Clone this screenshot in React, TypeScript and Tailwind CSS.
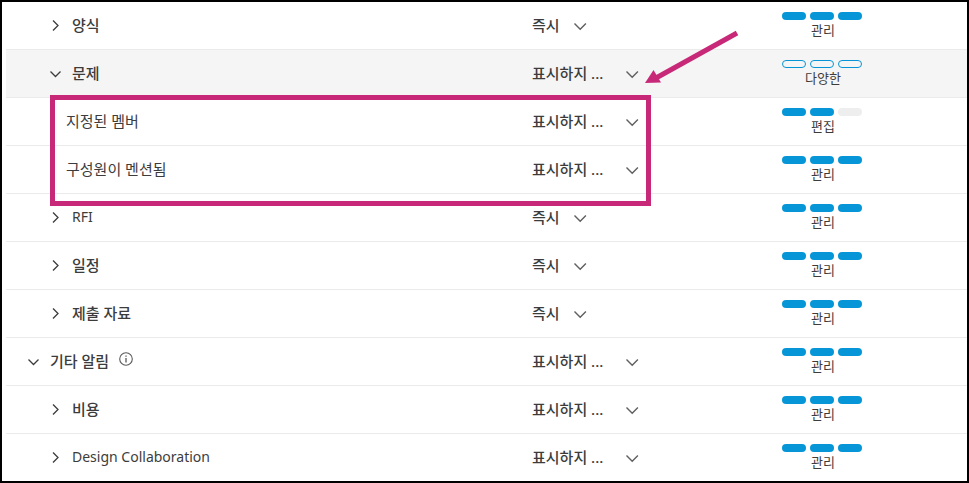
type Row = {
  label: string;
  level: "group" | "item" | "child";
  open?: boolean;
  info?: boolean;
  latin?: boolean;
  value: string;
  access: "관리" | "편집" | "다양한";
};

const HIDDEN = "표시하지 ...";
const INSTANT = "즉시";

const rows: Row[] = [
  { label: "양식", level: "item", value: INSTANT, access: "관리" },
  { label: "문제", level: "item", open: true, value: HIDDEN, access: "다양한" },
  { label: "지정된 멤버", level: "child", value: HIDDEN, access: "편집" },
  { label: "구성원이 멘션됨", level: "child", value: HIDDEN, access: "관리" },
  { label: "RFI", level: "item", latin: true, value: INSTANT, access: "관리" },
  { label: "일정", level: "item", value: INSTANT, access: "관리" },
  { label: "제출 자료", level: "item", value: INSTANT, access: "관리" },
  { label: "기타 알림", level: "group", open: true, info: true, value: HIDDEN, access: "관리" },
  { label: "비용", level: "item", value: HIDDEN, access: "관리" },
  { label: "Design Collaboration", level: "item", latin: true, value: HIDDEN, access: "관리" },
];

const indent = {
  group: "pl-5",
  item: "pl-[42px]",
  child: "pl-[60px]",
};

const pills = {
  관리: ["bg-[#0696d7]", "bg-[#0696d7]", "bg-[#0696d7]"],
  편집: ["bg-[#0696d7]", "bg-[#0696d7]", "bg-[#eeeeee]"],
  다양한: [
    "border border-[#0696d7]",
    "border border-[#0696d7]",
    "border border-[#0696d7]",
  ],
};

function Toggle({ label, open }: { label: string; open?: boolean }) {
  return (
    <button
      type="button"
      aria-label={label}
      aria-expanded={!!open}
      className="flex h-6 w-4 items-center justify-center"
    >
      <svg width="12" height="12" viewBox="0 0 12 12" fill="none" stroke="#3c3c3c" strokeWidth="1.3">
        {open ? <path d="M.5 4.500l5 5 5-5" /> : <path d="M3 1.500l5 5-5 5" />}
      </svg>
    </button>
  );
}

function InfoIcon() {
  return (
    <svg width="14" height="14" viewBox="0 0 14 14" fill="none" stroke="#5a5a5a" className="mb-1 ml-2.5">
      <circle cx="7" cy="7" r="6.3" strokeWidth="1.1" />
      <path d="M7 6v4.500M7 3.500v1.300" strokeWidth="1.3" />
    </svg>
  );
}

function Frequency({ label, value }: { label: string; value: string }) {
  return (
    <div className="relative inline-block align-middle">
      <select
        aria-label={label}
        defaultValue={value}
        className={
          value === INSTANT
            ? "block h-6 w-14 appearance-none bg-transparent font-medium"
            : "block h-6 w-27 appearance-none bg-transparent font-medium"
        }
      >
        <option>{INSTANT}</option>
        <option>{HIDDEN}</option>
      </select>
      <svg
        width="14"
        height="10"
        viewBox="0 0 14 10"
        fill="none"
        stroke="#5f5f5f"
        strokeWidth="1.4"
        className="pointer-events-none absolute right-0 top-2"
      >
        <path d="M.5 2.500l5.700 5.700 5.700-5.700" />
      </svg>
    </div>
  );
}

function Access({ access }: { access: Row["access"] }) {
  return (
    <div className="flex w-20 flex-col items-center">
      <div className="flex gap-1">
        {pills[access].map((style, i) => (
          <span key={i} className={`h-2 w-6 rounded-full ${style}`} />
        ))}
      </div>
      <span className="mt-0.5 pl-0.5 text-[13px] leading-4">{access}</span>
    </div>
  );
}

export default function App() {
  return (
    <main className="relative border-2 border-black bg-white pl-1 font-['Noto_Sans','Noto_Sans_CJK_KR',sans-serif] text-[15px] leading-5 text-[#3c3c3c]">
      <table className="w-full table-fixed border-separate border-spacing-0">
        <colgroup>
          <col />
          <col className="w-58" />
          <col className="w-[219px]" />
        </colgroup>
        <tbody>
          {rows.map((row) => (
            <tr
              key={row.label}
              className={
                row.label === "문제"
                  ? "h-12 bg-[#f5f5f5] *:border-b *:border-[#ebebeb]"
                  : "h-12 *:border-b *:border-[#ebebeb] last:h-[47px] last:*:border-b-0"
              }
            >
              <th scope="row" className={`p-0 pb-0.5 text-left font-medium ${indent[row.level]}`}>
                <div className="flex items-center">
                  {row.level !== "child" && (
                    <span className="mr-2">
                      <Toggle label={row.label} open={row.open} />
                    </span>
                  )}
                  <span
                    className={
                      row.latin
                        ? "text-sm font-normal"
                        : row.level === "child"
                          ? "font-normal"
                          : "font-medium"
                    }
                  >
                    {row.label}
                  </span>
                  {row.info && <InfoIcon />}
                </div>
              </th>
              <td className="p-0 pb-0.5 pl-4">
                <Frequency label={`${row.label} 알림 빈도`} value={row.value} />
              </td>
              <td className="p-0 pb-0.5 pl-[34px]">
                <Access access={row.access} />
              </td>
            </tr>
          ))}
        </tbody>
      </table>

      {/* callout around the expanded sub-items */}
      <div className="pointer-events-none absolute left-12 right-[316px] top-[93px] h-[111px] border-5 border-[#c82878]" />
      <svg
        width="96"
        height="56"
        viewBox="0 0 96 56"
        className="pointer-events-none absolute right-[228px] top-7"
      >
        <path d="M94 3L13 48" stroke="#c82878" strokeWidth="5" />
        <path d="M2 53L10.500 40L18 52.500Z" fill="#c82878" />
      </svg>
    </main>
  );
}
